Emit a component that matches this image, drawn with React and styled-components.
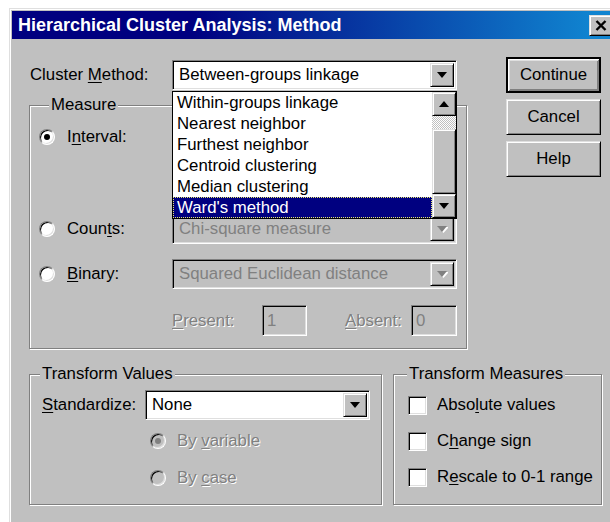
import React from 'react';
import styled, { createGlobalStyle, css } from 'styled-components';

const Global = createGlobalStyle`
  html, body { margin: 0; padding: 0; background: #fff; overflow: hidden; }
  body {
    font-family: "Liberation Sans", Arial, sans-serif;
    font-size: 16.8px;
    color: #000;
  }
  u { text-decoration: underline; text-underline-offset: 2px; }
`;

const FACE = '#c0c0c0';

const sunken = css`
  box-sizing: border-box;
  border: 1px solid;
  border-color: #808080 #fff #fff #808080;
  box-shadow: inset 1px 1px #000, inset -1px -1px #dfdfdf;
`;

const raised = css`
  box-sizing: border-box;
  background: ${FACE};
  border: 1px solid;
  border-color: #dfdfdf #000 #000 #dfdfdf;
  box-shadow: inset 1px 1px #fff, inset -1px -1px #808080;
`;

const disabledText = css`
  color: #808080;
  text-shadow: 1px 1px 0 #fff;
`;

const Window = styled.div`
  ${raised};
  margin: 8px 0 0 9px;
  width: 610px;
  height: 516px;
  padding: 2px;
  display: flex;
  flex-direction: column;
`;

const TitleBar = styled.div`
  height: 28px;
  flex: none;
  display: flex;
  align-items: center;
  justify-content: space-between;
  padding: 0 3px 0 6px;
  background: linear-gradient(90deg, #000080 0%, #000080 30%, #1084d0 96%);
`;

const Title = styled.span`
  color: #fff;
  font-weight: bold;
  font-size: 18px;
  white-space: nowrap;
`;

const CloseButton = styled.div`
  ${raised};
  width: 24px;
  height: 21px;
  display: flex;
  align-items: center;
  justify-content: center;
`;

const Content = styled.div`
  padding: 18px 0 0 17px;
  display: flex;
  flex-direction: column;
`;

const TopSection = styled.div`
  display: flex;
  align-items: flex-start;
`;

const LeftColumn = styled.div`
  width: 438px;
  padding-top: 3px;
  display: flex;
  flex-direction: column;
`;

const MethodRow = styled.div`
  display: flex;
  align-items: center;
  height: 30px;
`;

const FieldLabel = styled.span`
  width: ${p => p.$w}px;
  padding-left: ${p => p.$pad || 0}px;
  box-sizing: border-box;
  white-space: nowrap;
  flex: none;
  ${p => p.$disabled && disabledText};
`;

const ButtonColumn = styled.div`
  margin-left: 39px;
  width: 95px;
  display: flex;
  flex-direction: column;
  gap: 6px;
`;

const PushButton = styled.div`
  ${raised};
  height: 36px;
  display: flex;
  align-items: center;
  justify-content: center;
  ${p => p.$default && css`
    border: 2px solid #000;
    box-shadow: inset 1px 1px #fff, inset -1px -1px #808080, inset 2px 2px #dfdfdf, inset -2px -2px #808080;
  `};
`;

/* ---------- combo box ---------- */

const Combo = styled.div`
  ${sunken};
  position: relative;
  width: ${p => p.$w}px;
  height: ${p => p.$h || 30}px;
  padding: 2px;
  display: flex;
  align-items: stretch;
  background: ${p => (p.$disabled ? FACE : '#fff')};
`;

const ComboText = styled.span`
  flex: 1;
  display: flex;
  align-items: center;
  padding-left: 4px;
  white-space: nowrap;
  overflow: hidden;
  color: ${p => (p.$disabled ? '#808080' : '#000')};
`;

const ArrowButton = styled.div`
  ${raised};
  width: ${p => p.$w || 24}px;
  height: ${p => p.$h ? `${p.$h}px` : 'auto'};
  flex: none;
  display: flex;
  align-items: center;
  justify-content: center;
`;

const Arrow = ({ up, disabled }) => (
  <svg width="11" height="7" viewBox="0 0 11 7">
    {disabled && <path d="M1 1h11L6.5 7z" fill="#fff" />}
    <path d={up ? 'M0 6h10L5 0z' : 'M0 0h10L5 6z'} fill={disabled ? '#808080' : '#000'} />
  </svg>
);

const DropList = styled.div`
  position: absolute;
  z-index: 10;
  left: -1px;
  top: calc(100% + 2px);
  width: ${p => p.$w}px;
  box-sizing: border-box;
  border: 1px solid #000;
  background: #fff;
  display: flex;
`;

const ListItems = styled.div`
  flex: 1;
  display: flex;
  flex-direction: column;
`;

const ListItem = styled.div`
  height: 21px;
  box-sizing: border-box;
  display: flex;
  align-items: center;
  padding-left: 4px;
  white-space: nowrap;
  ${p => p.$selected && css`
    background: #000080;
    color: #fff;
    outline: 1px dotted #e8e870;
    outline-offset: -1px;
  `};
`;

const ScrollBar = styled.div`
  width: 24px;
  display: flex;
  flex-direction: column;
`;

const ScrollTrack = styled.div`
  height: ${p => p.$h}px;
  background: repeating-conic-gradient(#fff 0 25%, #c0c0c0 0 50%) 0 0 / 2px 2px;
`;

const ScrollThumb = styled.div`
  ${raised};
  flex: 1;
`;

/* ---------- group boxes ---------- */

const Group = styled.fieldset`
  box-sizing: border-box;
  margin: ${p => p.$mt || 0}px 0 0;
  width: ${p => p.$w}px;
  height: ${p => p.$h}px;
  min-width: 0;
  padding: 0 0 0 ${p => p.$pl}px;
  border: 1px solid #808080;
  box-shadow: inset 1px 1px #fff, 1px 1px #fff;
  display: flex;
  flex-direction: column;
`;

const Legend = styled.legend`
  margin-left: ${p => p.$ml}px;
  padding: 0 2px;
  line-height: 20px;
  background: ${FACE};
`;

const OptionRow = styled.div`
  display: grid;
  grid-template-columns: ${p => p.$cols};
  align-items: center;
  height: ${p => p.$h || 30}px;
  margin-top: ${p => p.$mt || 0}px;
`;

const RadioLabel = styled.label`
  display: flex;
  align-items: center;
  gap: ${p => p.$gap || 12}px;
  white-space: nowrap;
  ${p => p.$disabled && disabledText};
`;

const Radio = styled.span`
  box-sizing: border-box;
  width: 16px;
  height: 16px;
  flex: none;
  border-radius: 50%;
  border: 1px solid;
  border-color: #808080 #fff #fff #808080;
  box-shadow: inset 1px 1px #000, inset -1px -1px #dfdfdf;
  background: ${p => (p.$disabled ? FACE : '#fff')};
  display: flex;
  align-items: center;
  justify-content: center;
  text-shadow: none;
  &::after {
    content: '';
    display: ${p => (p.$checked ? 'block' : 'none')};
    width: 6px;
    height: 6px;
    border-radius: 50%;
    background: ${p => (p.$disabled ? '#808080' : '#000')};
  }
`;

const PairRow = styled.div`
  display: flex;
  align-items: center;
`;

const TextField = styled.div`
  ${sunken};
  width: ${p => p.$w}px;
  height: 31px;
  padding-left: 4px;
  display: flex;
  align-items: center;
  background: ${FACE};
  color: #808080;
`;

const BottomRow = styled.div`
  display: flex;
  gap: 11px;
  margin-top: 15px;
`;

const CheckRow = styled.label`
  display: flex;
  align-items: center;
  gap: 10px;
  height: 24px;
  margin-top: ${p => p.$mt}px;
  white-space: nowrap;
`;

const CheckBox = styled.span`
  ${sunken};
  width: 19px;
  height: 19px;
  flex: none;
  background: #fff;
`;

const methods = [
  'Within-groups linkage',
  'Nearest neighbor',
  'Furthest neighbor',
  'Centroid clustering',
  'Median clustering',
  "Ward's method",
];

export default function App() {
  return (
    <>
      <Global />
      <Window>
        <TitleBar>
          <Title>Hierarchical Cluster Analysis: Method</Title>
          <CloseButton>
            <svg width="12" height="11" viewBox="0 0 12 11">
              <path d="M1.5 1l9 9M10.5 1l-9 9" stroke="#000" strokeWidth="2.4" />
            </svg>
          </CloseButton>
        </TitleBar>

        <Content>
          <TopSection>
            <LeftColumn>
              <MethodRow>
                <FieldLabel $w={143} $pad={1}>
                  Cluster <u>M</u>ethod:
                </FieldLabel>
                <Combo $w={285}>
                  <ComboText>Between-groups linkage</ComboText>
                  <ArrowButton>
                    <Arrow />
                  </ArrowButton>
                  <DropList $w={285}>
                    <ListItems>
                      {methods.map((m, i) => (
                        <ListItem key={m} $selected={i === methods.length - 1}>
                          {m}
                        </ListItem>
                      ))}
                    </ListItems>
                    <ScrollBar>
                      <ArrowButton $h={24}>
                        <Arrow up />
                      </ArrowButton>
                      <ScrollTrack $h={13} />
                      <ScrollThumb />
                      <ArrowButton $h={24}>
                        <Arrow />
                      </ArrowButton>
                    </ScrollBar>
                  </DropList>
                </Combo>
              </MethodRow>

              <Group $w={438} $h={254} $mt={5} $pl={9}>
                <Legend $ml={10}>Measure</Legend>
                <OptionRow $cols="133px 285px" $mt={7}>
                  <RadioLabel>
                    <Radio $checked />
                    <span>I<u>n</u>terval:</span>
                  </RadioLabel>
                </OptionRow>
                <OptionRow $cols="133px 285px" $mt={62}>
                  <RadioLabel>
                    <Radio />
                    <span>Coun<u>t</u>s:</span>
                  </RadioLabel>
                  <Combo $w={285} $disabled>
                    <ComboText $disabled>Chi-square measure</ComboText>
                    <ArrowButton>
                      <Arrow disabled />
                    </ArrowButton>
                  </Combo>
                </OptionRow>
                <OptionRow $cols="133px 285px" $mt={15}>
                  <RadioLabel>
                    <Radio />
                    <span><u>B</u>inary:</span>
                  </RadioLabel>
                  <Combo $w={285} $disabled>
                    <ComboText $disabled>Squared Euclidean distance</ComboText>
                    <ArrowButton>
                      <Arrow disabled />
                    </ArrowButton>
                  </Combo>
                </OptionRow>
                <OptionRow $cols="133px 285px" $mt={16} $h={31}>
                  <span />
                  <PairRow>
                    <FieldLabel $w={90} $disabled>
                      <u>P</u>resent:
                    </FieldLabel>
                    <TextField $w={45}>1</TextField>
                    <FieldLabel $w={104} $pad={38} $disabled>
                      <u>A</u>bsent:
                    </FieldLabel>
                    <TextField $w={46}>0</TextField>
                  </PairRow>
                </OptionRow>
              </Group>
            </LeftColumn>

            <ButtonColumn>
              <PushButton $default>Continue</PushButton>
              <PushButton>Cancel</PushButton>
              <PushButton>Help</PushButton>
            </ButtonColumn>
          </TopSection>

          <BottomRow>
            <Group $w={353} $h={141} $pl={12}>
              <Legend $ml={-2}>Transform Values</Legend>
              <OptionRow $cols="103px 225px" $mt={6}>
                <FieldLabel $w={103}>
                  <u>S</u>tandardize:
                </FieldLabel>
                <Combo $w={225}>
                  <ComboText>None</ComboText>
                  <ArrowButton>
                    <Arrow />
                  </ArrowButton>
                </Combo>
              </OptionRow>
              <OptionRow $cols="108px auto" $h={24} $mt={9}>
                <span />
                <RadioLabel $gap={11} $disabled>
                  <Radio $checked $disabled />
                  <span>By <u>v</u>ariable</span>
                </RadioLabel>
              </OptionRow>
              <OptionRow $cols="108px auto" $h={24} $mt={13}>
                <span />
                <RadioLabel $gap={11} $disabled>
                  <Radio $disabled />
                  <span>By <u>c</u>ase</span>
                </RadioLabel>
              </OptionRow>
            </Group>

            <Group $w={209} $h={141} $pl={14}>
              <Legend $ml={-1}>Transform Measures</Legend>
              <CheckRow $mt={9}>
                <CheckBox />
                <span>Abso<u>l</u>ute values</span>
              </CheckRow>
              <CheckRow $mt={12}>
                <CheckBox />
                <span>C<u>h</u>ange sign</span>
              </CheckRow>
              <CheckRow $mt={12}>
                <CheckBox />
                <span>R<u>e</u>scale to 0-1 range</span>
              </CheckRow>
            </Group>
          </BottomRow>
        </Content>
      </Window>
    </>
  );
}
